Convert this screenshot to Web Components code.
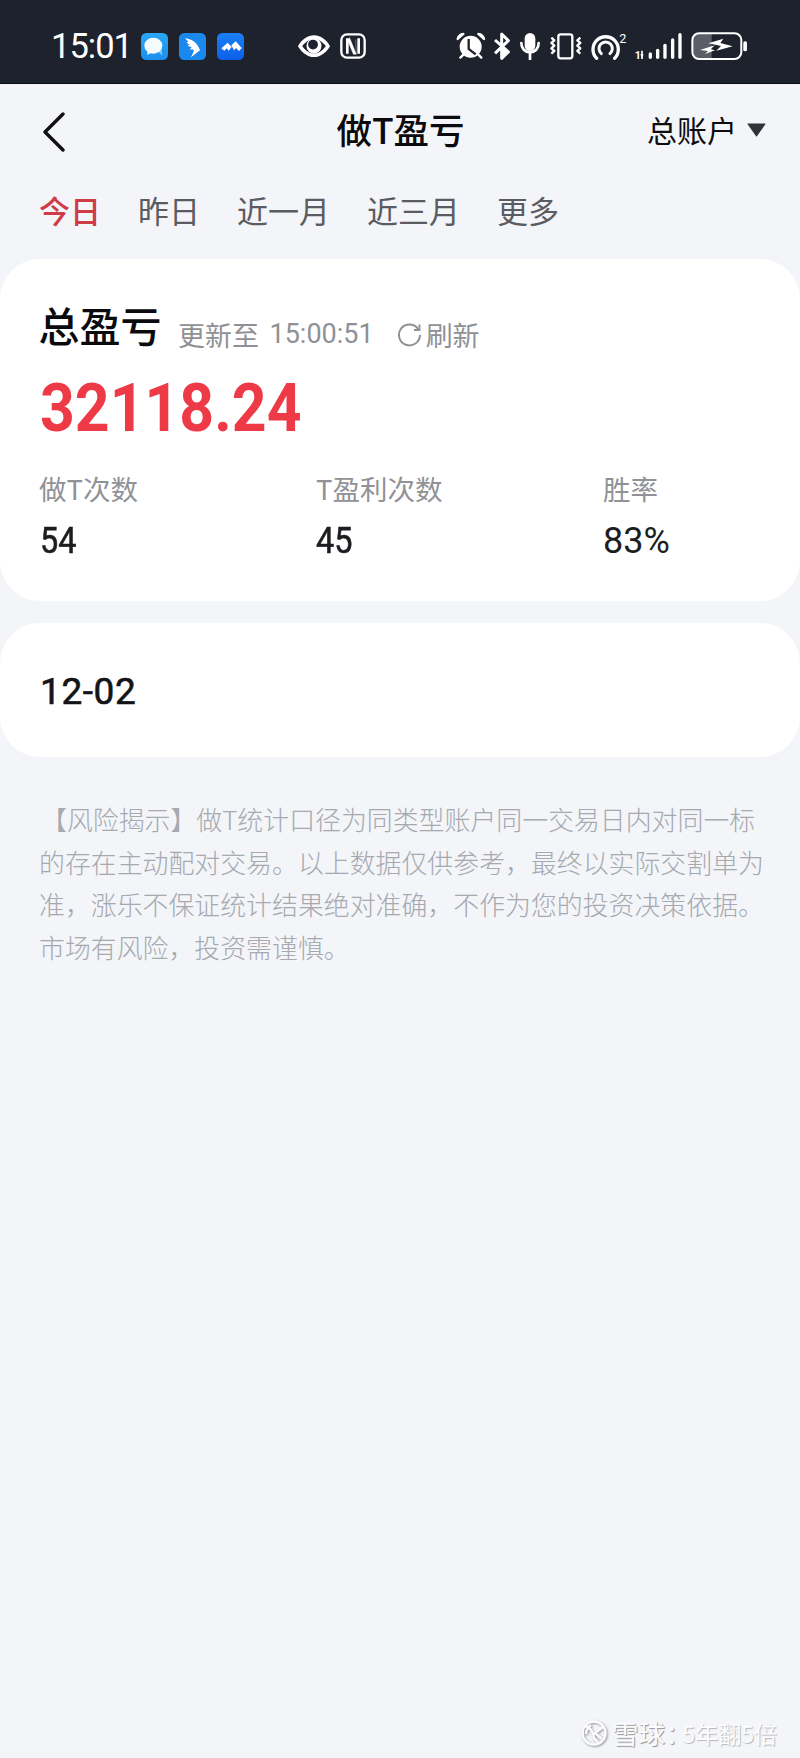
<!DOCTYPE html>
<html lang="zh">
<head>
<meta charset="utf-8">
<title>做T盈亏</title>
<style>
	html, body { margin: 0; padding: 0; background: #f3f5f9; }
	body { width: 800px; height: 1758px; overflow: hidden; font-family: "Noto Sans CJK SC", Roboto, sans-serif; }
	app-page { height: 1758px; }
</style>
</head>
<body>
<app-page>
	<status-bar></status-bar>
	<nav-bar title="做T盈亏" account="总账户"></nav-bar>
	<range-tabs></range-tabs>
	<summary-card></summary-card>
	<day-card>12-02</day-card>
	<risk-note>【风险揭示】做T统计口径为同类型账户同一交易日内对同一标的存在主动配对交易。以上数据仅供参考，最终以实际交割单为准，涨乐不保证统计结果绝对准确，不作为您的投资决策依据。市场有风险，投资需谨慎。</risk-note>
	<water-mark></water-mark>
</app-page>

<script>
const CJK = '"Noto Sans CJK SC", sans-serif';
const NUM = 'Roboto, "Noto Sans CJK SC", sans-serif';
const BAR = '#1e222d';

class AppPage extends HTMLElement {
	constructor(){
		super();
		this.attachShadow({mode : 'open'}).innerHTML = `
			<style>
				:host{ display: flex; flex-direction: column; position: relative; background: #f3f5f9; }
			</style>
			<slot></slot>`;
	}
}

class StatusBar extends HTMLElement {
	constructor(){
		super();
		// icon viewBoxes are in 3x crop units, so the paths can be read straight off the zoom
		this.attachShadow({mode : 'open'}).innerHTML = `
			<style>
				:host{
					display: flex;
					align-items: center;
					height: 84px;
					padding: 9px 0 0 51px;
					box-sizing: border-box;
					background: ${BAR};
					border-bottom: 1px solid #0c0e14;
					color: #fff;
				}
				.time{ font: 400 34.500px/1 ${NUM}; letter-spacing: -1px; width: 90px; }
				svg{ display: block; flex: none; }
				.group{ display: flex; align-items: center; }
			</style>
			<span class="time">15:01</span>
			<div class="group" style="gap:11px">
				<svg width="27" height="27" viewBox="422 98 81 81">
					<defs><linearGradient id="a1" x1="0" y1="0" x2="0" y2="1"><stop offset="0" stop-color="#2aa9f7"/><stop offset="1" stop-color="#1a8eee"/></linearGradient></defs>
					<rect x="422" y="98" width="81" height="81" rx="16" fill="url(#a1)"/>
					<path d="M470 150l16 16-3-22z" fill="#7fcdf8"/>
					<ellipse cx="459" cy="136" rx="27" ry="24" fill="#f4fbff"/>
					<path d="M442 153l-2 10 13-5z" fill="#f4fbff"/>
				</svg>
				<svg width="27" height="27" viewBox="537 98 81 81">
					<rect x="537" y="98" width="81" height="81" rx="16" fill="#1a88ec"/>
					<path d="M555 114c18 2 36 10 45 36l-27 21 9-20-4-4-9 1 6-7-13-5 7-3-10-6 6-3z" fill="#fff"/>
				</svg>
				<svg width="27" height="27" viewBox="651 98 81 81">
					<defs><linearGradient id="a3" x1="0" y1="0" x2="0" y2="1"><stop offset="0" stop-color="#1a80f6"/><stop offset="1" stop-color="#0c5fe8"/></linearGradient></defs>
					<rect x="651" y="98" width="81" height="81" rx="16" fill="url(#a3)"/>
					<path d="M664 144l19-17 12 13-9 11-6-7-7 7z M694 135l13-12 18 20-8 9-9-9-6 7z" fill="#fff"/>
				</svg>
			</div>
			<div class="group" style="gap:8px;margin-left:52px">
				<svg width="36" height="25" viewBox="886 100 110 76">
					<path d="M892 137c13-22 31-33 49-33s36 11 49 33c-13 22-31 33-49 33s-36-11-49-33z" fill="#fff"/>
					<path d="M905 137c10-14 23-22 36-22s26 8 36 22c-10 14-23 22-36 22s-26-8-36-22z" fill="${BAR}"/>
					<circle cx="941" cy="136" r="23" fill="#fff"/>
					<circle cx="938" cy="132" r="15" fill="${BAR}"/>
				</svg>
				<svg width="26" height="26" viewBox="1019 96 78 78">
					<rect x="1023" y="100" width="70" height="70" rx="17" fill="${BAR}" stroke="#fff" stroke-width="7"/>
					<path d="M1041 112v46M1075 112v46" stroke="#fff" stroke-width="8"/>
					<path d="M1048 110l20 50h-9l-18-44zM1068 160l-2-44" fill="#fff" stroke="#fff" stroke-width="1"/>
				</svg>
			</div>
			<div class="group" style="margin-left:90px">
				<svg width="30" height="28.300" viewBox="167 95 90 85">
					<path d="M172 116c1-8 8-15 17-15zM251 116c-1-8-8-15-17-15zM180 172l9-9M243 172l-9-9" stroke="#fff" stroke-width="7" stroke-linecap="round" stroke-linejoin="round" fill="#fff"/>
					<circle cx="211" cy="139" r="33" fill="#fff"/>
					<path d="M205 116v30l21 16" fill="none" stroke="${BAR}" stroke-width="7"/>
				</svg>
				<svg style="margin-left:6px" width="20" height="28.300" viewBox="275 95 60 85">
					<path d="M284 119l40 36-20 19V101l20 20-40 38" fill="none" stroke="#fff" stroke-width="9" stroke-linejoin="round"/>
					<path d="M306 140l18 15-18 18z" fill="#fff"/>
				</svg>
				<svg style="margin-left:6.600px" width="22" height="28.300" viewBox="355 95 66 85">
					<rect x="372" y="98" width="32" height="54" rx="16" fill="#fff"/>
					<path d="M362 128c0 17 11 28 26 28s26-11 26-28M388 156v22" fill="none" stroke="#fff" stroke-width="8" stroke-linecap="round"/>
				</svg>
				<svg style="margin-left:8px" width="34" height="28.300" viewBox="445 95 102 85">
					<rect x="473" y="102" width="42" height="72" rx="7" fill="none" stroke="#fff" stroke-width="7"/>
					<path d="M452 112l9 8-9 8 9 8-9 8 9 8-9 8M539 112l-9 8 9 8-9 8 9 8-9 8 9 8" fill="none" stroke="#fff" stroke-width="7" stroke-linejoin="round"/>
				</svg>
				<svg style="margin-left:7.700px" width="38.300" height="28.300" viewBox="570 95 115 85">
					<path d="M590 174a38 38 0 1 1 54 0" fill="none" stroke="#fff" stroke-width="10" stroke-linecap="round"/>
					<path d="M604 160a20 20 0 1 1 26 0" fill="none" stroke="#fff" stroke-width="9" stroke-linecap="round"/>
					<text x="658" y="128" font-family="Roboto" font-size="38" fill="#fff">2</text>
				</svg>
				<svg style="margin:3.300px 0 0 3px" width="50.300" height="31.700" viewBox="694 95 151 95">
					<text x="702" y="176" font-family="Roboto" font-weight="700" font-size="32" fill="#fff">1</text>
					<path d="M724 151v25" stroke="#fff" stroke-width="5"/><path d="M719 162h10l-5 12z" fill="#fff"/>
					<g fill="#fff">
						<rect x="744" y="156" width="10" height="20" rx="5"/>
						<rect x="766" y="145" width="10" height="31" rx="5"/>
						<rect x="788" y="130" width="10" height="46" rx="5"/>
						<rect x="811" y="114" width="10" height="62" rx="5"/>
						<rect x="833" y="98" width="10" height="78" rx="5"/>
					</g>
				</svg>
				<svg style="margin-left:9.300px" width="57" height="28.300" viewBox="873 95 171 85">
					<path d="M895 100h40v75h-40a17 17 0 0 1-17-17v-41a17 17 0 0 1 17-17z" fill="#5b5e67"/>
					<rect x="877" y="99" width="147" height="77" rx="20" fill="none" stroke="#fff" stroke-width="6"/>
					<rect x="1030" y="123" width="11" height="30" rx="5" fill="#fff"/>
					<path d="M900 149l44-14-12 12 13 3-30 11 9-9zM925 129l45-14-9 13 37 10-49 13 14-14z" fill="#fff"/>
				</svg>
			</div>`;
	}
}

class NavBar extends HTMLElement {
	constructor(){
		super();
		this.attachShadow({mode : 'open'}).innerHTML = `
			<style>
				:host{
					display: grid;
					grid-template-columns: 1fr auto 1fr;
					align-items: center;
					box-sizing: border-box;
					height: 91px;
					padding: 0 34px 2px 35px;
				}
				.title{ font: 500 35.500px/1 ${CJK}; color: #0b0b0d; }
				.account{ justify-self: end; display: flex; align-items: center; gap: 10px; font: 400 30px/1 ${CJK}; color: #0d0d10; }
				.account svg{ margin-top: 3px; }
				.back{ margin: 7px 0 0 7px; }
				svg{ display: block; }
			</style>
			<svg class="back" width="24" height="40" viewBox="0 0 24 40"><path d="M21 2L3 20l18 18" fill="none" stroke="#111" stroke-width="3.400" stroke-linecap="round" stroke-linejoin="round"/></svg>
			<span class="title">${this.getAttribute('title')}</span>
			<span class="account">${this.getAttribute('account')}<svg width="19" height="14" viewBox="0 0 18 14" preserveAspectRatio="none"><path d="M1 1h16l-8 12z" fill="#30333a" stroke="#30333a" stroke-linejoin="round"/></svg></span>`;
	}
}

class RangeTabs extends HTMLElement {
	constructor(){
		super();
		let names = ['今日', '昨日', '近一月', '近三月', '更多'];
		this.attachShadow({mode : 'open'}).innerHTML = `
			<style>
				:host{
					display: flex;
					align-items: center;
					box-sizing: border-box;
					gap: 37px;
					height: 84px;
					padding: 0 0 15px 39px;
					font: 400 31px/1 ${CJK};
					color: #5a5c62;
				}
				.on{ color: #cf3b46; font-weight: 500; }
			</style>
			${names.map((n, i) => `<span class="${i == 0 ? 'on' : ''}">${n}</span>`).join('')}`;
	}
}

class SummaryCard extends HTMLElement {
	constructor(){
		super();
		this.attachShadow({mode : 'open'}).innerHTML = `
			<style>
				:host{
					display: block;
					height: 342px;
					box-sizing: border-box;
					padding: 42px 40px 0;
					background: #fff;
					border-radius: 40px;
				}
				.head{ display: flex; align-items: flex-start; color: #8f9196; font: 400 27px/27px ${CJK}; }
				.head b{ font: 500 41px/46px ${CJK}; color: #0b0b0d; margin: 0 16.500px 0 -1.500px; }
				.sub{ display: flex; align-items: center; margin-top: 20px; }
				.time{ font-family: ${NUM}; margin-left: 10.500px; }
				.refresh{ display: flex; align-items: center; margin-left: 23px; }
				.refresh svg{ margin-right: 4px; }
				.total{ font: 700 66px/1 ${NUM}; color: #ee3a46; margin-top: 28px; transform: scaleX(.92); transform-origin: left; }
				.stats{ display: grid; grid-template-columns: 276px 287px auto; margin-top: 30px; }
				.label{ font: 400 27.500px/1.2 ${CJK}; color: #909297; }
				.val{ font: 400 36px/1 ${NUM}; -webkit-text-stroke: .6px #1c1d20; color: #1c1d20; margin-top: 18px; transform: scaleX(.9); transform-origin: left; }
				.val.plain{ -webkit-text-stroke: 0; transform: none; }
			</style>
			<div class="head"><b>总盈亏</b>
				<div class="sub">更新至<span class="time">15:00:51</span>
					<span class="refresh"><svg width="25" height="25" viewBox="0 0 25 25"><path d="M21.500 7.500A10.500 10.500 0 1 0 23 13" fill="none" stroke="#8f9196" stroke-width="2"/><path d="M22.500 2.500v5.500h-5.500" fill="none" stroke="#8f9196" stroke-width="1.800"/></svg>刷新</span>
				</div>
			</div>
			<div class="total">32118.24</div>
			<div class="stats">
				<div><div class="label" style="margin-left:-1px">做T次数</div><div class="val">54</div></div>
				<div><div class="label">T盈利次数</div><div class="val">45</div></div>
				<div><div class="label">胜率</div><div class="val plain">83%</div></div>
			</div>`;
	}
}

class DayCard extends HTMLElement {
	constructor(){
		super();
		this.attachShadow({mode : 'open'}).innerHTML = `
			<style>
				:host{
					display: flex;
					align-items: center;
					box-sizing: border-box;
					height: 134px;
					margin-top: 22px;
					padding: 2px 0 0 40px;
					background: #fff;
					border-radius: 40px;
					font: 400 37px/1 ${NUM};
					-webkit-text-stroke: .6px #131417;
					letter-spacing: .6px;
					color: #131417;
				}
			</style>
			<slot></slot>`;
	}
}

class RiskNote extends HTMLElement {
	constructor(){
		super();
		this.attachShadow({mode : 'open'}).innerHTML = `
			<style>
				:host{
					display: block;
					margin-top: 41px;
					padding: 0 31px 0 39px;
					font: 300 25.900px/42.600px ${CJK};
					text-indent: 2px;
					color: #a6a9af;
				}
			</style>
			<slot></slot>`;
	}
}

class WaterMark extends HTMLElement {
	constructor(){
		super();
		this.attachShadow({mode : 'open'}).innerHTML = `
			<style>
				:host{
					position: absolute;
					right: 23px;
					top: 1719px;
					display: flex;
					align-items: center;
					font: 400 26.500px/28px ${CJK};
					color: #fdfdfe;
					text-shadow: 1px 1px 1px #8f9196;
				}
				svg{ display: block; margin-right: 5px; filter: drop-shadow(1px 1px 1px #8f9196); }
				.colon{ letter-spacing: -12px; }
				.rest{ font-size: 23px; text-shadow: 1px 1px 1px #b4b6bb; margin-left: 3px; }
			</style>
			<svg width="26" height="28" viewBox="0 0 26 28"><circle cx="13" cy="14" r="11.500" fill="none" stroke="#fdfdfe" stroke-width="2.400"/><path d="M4 7c5 1 9 7 9 12l5 6M22 8l-8 6 7 6M10 6c-3 2-5 5-5 9" fill="none" stroke="#fdfdfe" stroke-width="2.400"/></svg>
			<span>雪球<span class="colon">：</span></span><span class="rest">5年翻5倍</span>`;
	}
}

window.customElements.define('app-page', AppPage);
window.customElements.define('status-bar', StatusBar);
window.customElements.define('nav-bar', NavBar);
window.customElements.define('range-tabs', RangeTabs);
window.customElements.define('summary-card', SummaryCard);
window.customElements.define('day-card', DayCard);
window.customElements.define('risk-note', RiskNote);
window.customElements.define('water-mark', WaterMark);
</script>
</body>
</html>
